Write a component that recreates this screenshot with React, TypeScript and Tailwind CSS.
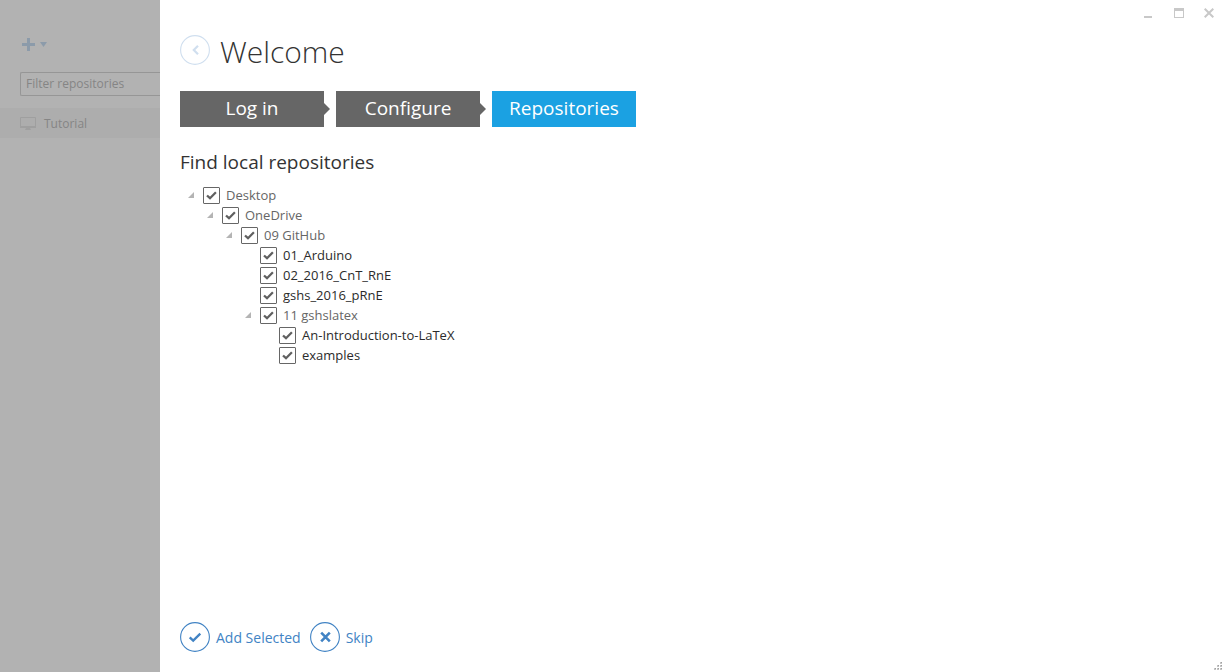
import type { ReactNode } from "react";

type RepoNode = { name: string; children?: RepoNode[] };

const tree: RepoNode[] = [
  {
    name: "Desktop",
    children: [
      {
        name: "OneDrive",
        children: [
          {
            name: "09 GitHub",
            children: [
              { name: "01_Arduino" },
              { name: "02_2016_CnT_RnE" },
              { name: "gshs_2016_pRnE" },
              {
                name: "11 gshslatex",
                children: [{ name: "An-Introduction-to-LaTeX" }, { name: "examples" }],
              },
            ],
          },
        ],
      },
    ],
  },
];

function TreeItem({ node }: { node: RepoNode }) {
  const isFolder = Boolean(node.children);
  return (
    <li>
      <div className="flex h-5 items-center">
        {isFolder ? (
          <button type="button" aria-label={`Collapse ${node.name}`} className="h-5 w-[23px] pl-2">
            <svg width="7" height="7" viewBox="0 0 7 7" className="block">
              <path d="M6 0V6H0Z" fill="#b4b4b4" />
            </svg>
          </button>
        ) : (
          <span className="w-[23px]" />
        )}
        <label className={`flex items-center gap-1.5 text-[13px] leading-5 ${isFolder ? "text-[#666666]" : "text-[#2b2b2b]"}`}>
          <span className="grid size-[17px] place-items-center">
            <input
              type="checkbox"
              defaultChecked
              className="peer col-start-1 row-start-1 size-[17px] appearance-none rounded-[1px] border border-[#666666] bg-white"
            />
            <svg width="17" height="17" viewBox="0 0 17 17" className="pointer-events-none invisible col-start-1 row-start-1 peer-checked:visible">
              <path d="M4 8.5L7 11.2L12.9 5.3" fill="none" stroke="#606060" strokeWidth="2.3" />
            </svg>
          </span>
          {node.name}
        </label>
      </div>
      {node.children && (
        <ul className="pl-[19px]">
          {node.children.map((child) => (
            <TreeItem key={child.name} node={child} />
          ))}
        </ul>
      )}
    </li>
  );
}

function Step({ label, current, last }: { label: string; current?: boolean; last?: boolean }) {
  return (
    <li className="flex items-center">
      <button
        type="button"
        aria-current={current ? "step" : undefined}
        className={`h-9 w-36 pb-0.5 text-[19px] leading-8 text-white ${current ? "bg-[#1ba1e2]" : "bg-[#666666]"}`}
      >
        {label}
      </button>
      {!last && (
        <svg width="12" height="12" viewBox="0 0 12 12">
          <path d="M0 0L6 6L0 12Z" fill="#666666" />
        </svg>
      )}
    </li>
  );
}

function ActionButton({ label, children }: { label: string; children: ReactNode }) {
  return (
    <button type="button" className="flex items-center gap-1.5 text-sm text-[#4183c4]">
      <svg width="30" height="30" viewBox="0 0 30 30" fill="none" stroke="currentColor">
        <circle cx="15" cy="15" r="14.4" strokeWidth="1.1" />
        {children}
      </svg>
      <span className="pt-0.5">{label}</span>
    </button>
  );
}

function Sidebar() {
  return (
    <aside className="w-40 shrink-0 overflow-hidden bg-[#b2b2b2] pt-[38px] text-xs text-[#858585]">
      <button type="button" aria-label="Add repository" className="ml-[22px] flex items-center gap-[5px] text-[#8c9baa]">
        <svg width="13" height="13" viewBox="0 0 13 13">
          <path d="M5 0H8V5H13V8H8V13H5V8H0V5H5Z" fill="currentColor" />
        </svg>
        <svg width="7" height="5" viewBox="0 0 7 5">
          <path d="M0 0H7L3.5 5Z" fill="currentColor" />
        </svg>
      </button>
      <div className="mt-[21px] pl-5">
        <input
          type="text"
          aria-label="Filter repositories"
          placeholder="Filter repositories"
          className="block h-6 w-full rounded-l-[2px] border border-r-0 border-[#969696] bg-transparent px-[5px] pb-0.5 placeholder:text-[#858585]"
        />
      </div>
      <a href="#tutorial" className="mt-3 flex h-[30px] items-center gap-2 bg-[#adadad] pl-5">
        <svg width="16" height="13" viewBox="0 0 16 13" fill="none">
          <path d="M0.5 0.5H15.5V10.5H0.5Z" stroke="#9f9f9f" />
          <path d="M0 9H16V11H0ZM6 11H10L11 13H5Z" fill="#9f9f9f" />
        </svg>
        <span className="pt-0.5">Tutorial</span>
      </a>
    </aside>
  );
}

export default function App() {
  return (
    <div className="flex min-h-screen bg-white font-['Open_Sans','Noto_Sans',sans-serif]">
      <Sidebar />
      <main className="flex min-w-0 flex-1 flex-col pl-5">
        <div className="flex h-[35px] justify-end gap-5 pt-2 pr-[10px]">
          <button type="button" aria-label="Minimize" className="size-[10px]">
            <svg width="10" height="10" viewBox="0 0 10 10" className="block">
              <path d="M0 8H8V10H0Z" fill="#c8c8c8" />
            </svg>
          </button>
          <button type="button" aria-label="Maximize" className="size-[10px]">
            <svg width="10" height="10" viewBox="0 0 10 10" className="block">
              <path d="M0 0H10V10H0ZM1 3V9H9V3Z" fill="#c8c8c8" fillRule="evenodd" />
            </svg>
          </button>
          <button type="button" aria-label="Close" className="size-[10px]">
            <svg width="10" height="10" viewBox="0 0 10 10" className="block">
              <path d="M0.7 0.7L9.3 9.3M9.3 0.7L0.7 9.3" stroke="#c8c8c8" strokeWidth="2" />
            </svg>
          </button>
        </div>

        <header className="flex h-[30px] items-center gap-[10px]">
          <button type="button" aria-label="Back" className="text-[#d0dfef]">
            <svg width="30" height="30" viewBox="0 0 30 30" fill="none" stroke="currentColor" className="block">
              <circle cx="15" cy="15" r="14.4" strokeWidth="1.1" />
              <path d="M18 10.8L13.8 15L18 19.2" strokeWidth="2.2" />
            </svg>
          </button>
          <h1 className="pt-1 text-[30px] leading-8 font-light text-[#333333]">Welcome</h1>
        </header>

        <ol className="mt-[26px] flex">
          <Step label="Log in" />
          <Step label="Configure" />
          <Step label="Repositories" current last />
        </ol>

        <h2 className="mt-[21px] text-[19px] leading-7 text-[#333333]">Find local repositories</h2>
        <ul className="mt-[9px]">
          {tree.map((node) => (
            <TreeItem key={node.name} node={node} />
          ))}
        </ul>

        <footer className="mt-auto flex items-end justify-between">
          <div className="flex gap-[9px] pb-5">
            <ActionButton label="Add Selected">
              <path d="M9.7 15.3L13.2 18.6L20.3 11.6" strokeWidth="2.3" />
            </ActionButton>
            <ActionButton label="Skip">
              <path d="M11.2 10.7L19.8 19.3M19.8 10.7L11.2 19.3" strokeWidth="2.6" />
            </ActionButton>
          </div>
          <svg width="10" height="10" viewBox="0 0 10 10" className="mr-px" fill="#c4c4c4">
            <path d="M7 0H9V2H7ZM7 3H9V5H7ZM7 6H9V8H7ZM4 3H6V5H4ZM4 6H6V8H4ZM1 6H3V8H1Z" />
            <path d="M8 0H9V1H8ZM8 3H9V4H8ZM8 6H9V7H8ZM5 3H6V4H5ZM5 6H6V7H5ZM2 6H3V7H2Z" fill="#a0a0a0" />
          </svg>
        </footer>
      </main>
    </div>
  );
}
